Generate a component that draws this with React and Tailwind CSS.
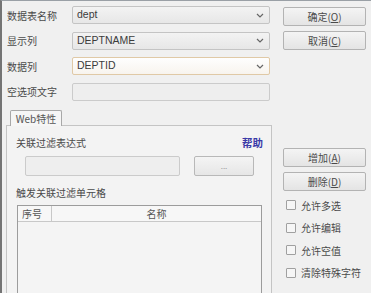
import React from 'react'

const cjk = { fontFamily: '"Noto Sans CJK SC", "Liberation Sans", sans-serif' }

function Chevron() {
    return (
        <svg width="8" height="5" viewBox="0 0 8 5" className="shrink-0">
            <path d="M1 1 L4 4 L7 1" fill="none" stroke="#666" strokeWidth="1.2" />
        </svg>
    )
}

function Combo({ value, hover }) {
    return (
        <div className={`w-[198px] h-[18px] flex items-center justify-between pl-[4px] pr-[5px] rounded-[2px] border ${hover ? 'border-[#e0c9a6] bg-gradient-to-b from-[#fefefe] to-[#f8f4ee]' : 'border-[#c4c4c4] bg-gradient-to-b from-[#f3f3f3] to-[#e7e7e7]'}`}>
            <span className="text-[10.5px] text-[#3c3c3c]" style={{ fontFamily: '"Liberation Sans", sans-serif' }}>{value}</span>
            <Chevron />
        </div>
    )
}

function Btn({ label, k }) {
    return (
        <button className="w-[83px] h-[19px] rounded-[2px] border border-[#b3b3b3] bg-gradient-to-b from-[#f4f4f4] to-[#e4e4e4] text-[10px] text-[#4a4a4a] flex items-center justify-center leading-none">
            {label}(<span className="underline">{k}</span>)
        </button>
    )
}

function Check({ label }) {
    return (
        <div className="flex items-center gap-[5px] h-[10px]">
            <div className="w-[10px] h-[10px] border border-[#a0a0a0] bg-[#f6f6f6] rounded-[1px]" />
            <span className="text-[10px] text-[#4a4a4a]">{label}</span>
        </div>
    )
}

export default function App() {
    const rows = [
        ['数据表名称', 'dept'],
        ['显示列', 'DEPTNAME'],
        ['数据列', 'DEPTID', true],
    ]
    return (
        <div className="w-[371px] h-[293px] overflow-hidden bg-[#f0f0f0] border-l-2 border-l-[#747474] border-t border-t-[#9aa0a6] flex" style={cjk}>
            {/* left */}
            <div className="w-[278px] flex flex-col pl-[4px]">
                <div className="flex flex-col gap-[7.5px] pt-[5px] pl-[1px]">
                    {rows.map(([l, v, h]) => (
                        <div key={l} className="flex items-center">
                            <span className="w-[65px] text-[10px] text-[#4a4a4a]">{l}</span>
                            <Combo value={v} hover={h} />
                        </div>
                    ))}
                    <div className="flex items-center">
                        <span className="w-[65px] text-[10px] text-[#4a4a4a]">空选项文字</span>
                        <div className="w-[198px] h-[18px] rounded-[2px] border border-[#cbcbcb] bg-[#eeeeee]" />
                    </div>
                </div>

                <div className="mt-[9px] ml-[4px] w-[52px] h-[16px] border border-b-0 border-[#a8a8a8] bg-[#f6f6f6] flex items-center justify-center text-[10px] text-[#555] rounded-t-[2px] relative z-10">
                    Web特性
                </div>
                <div className="-mt-px w-[266px] flex-1 border border-[#c4c4c4] border-b-0 bg-[#f3f3f3] pl-[9px] pt-[10px]">
                    <div className="flex items-center justify-between pr-[8px] h-[14px]">
                        <span className="text-[10px] text-[#4a4a4a]">关联过滤表达式</span>
                        <span className="text-[10.5px] text-[#3a3aa8] font-bold">帮助</span>
                    </div>
                    <div className="flex items-center mt-[6px] pl-[9px]">
                        <div className="w-[155px] h-[20px] rounded-[2px] border border-[#cbcbcb] bg-[#eeeeee]" />
                        <div className="ml-[14px] w-[60px] h-[20px] rounded-[2px] border border-[#b8b8b8] bg-gradient-to-b from-[#f4f4f4] to-[#e6e6e6] flex items-center justify-center text-[8px] text-[#999]">...</div>
                    </div>
                    <div className="mt-[10px] text-[10px] text-[#4a4a4a] h-[14px] flex items-center">触发关联过滤单元格</div>
                    <div className="mt-[5px] ml-[1px] w-[245px] h-[100px] border border-[#9c9c9c] bg-[#f4f4f4]">
                        <div className="flex h-[16px] border-b border-[#c8c8c8] bg-[#f7f7f7] text-[10px] text-[#555]">
                            <div className="w-[34px] border-r border-[#c8c8c8] pl-[4px] flex items-center">序号</div>
                            <div className="flex-1 flex items-center justify-center">名称</div>
                        </div>
                    </div>
                </div>
            </div>

            {/* right */}
            <div className="flex flex-col pl-[3px] pt-[6px]">
                <div className="flex flex-col gap-[5px]">
                    <Btn label="确定" k="O" />
                    <Btn label="取消" k="C" />
                </div>
                <div className="flex flex-col gap-[5px] mt-[98px]">
                    <Btn label="增加" k="A" />
                    <Btn label="删除" k="D" />
                </div>
                <div className="flex flex-col gap-[12.5px] mt-[9px] pl-[3px]">
                    <Check label="允许多选" />
                    <Check label="允许编辑" />
                    <Check label="允许空值" />
                    <Check label="清除特殊字符" />
                </div>
            </div>
        </div>
    )
}
